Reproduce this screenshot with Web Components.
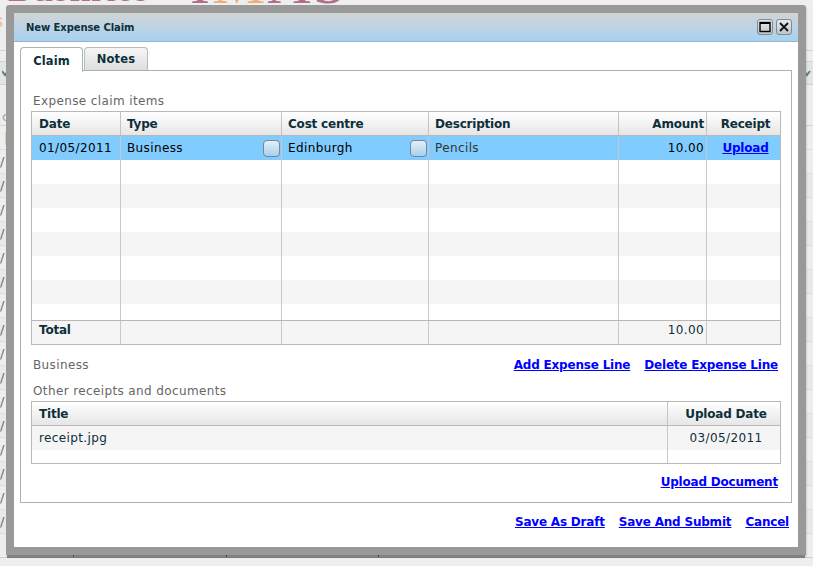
<!DOCTYPE html>
<html><head><meta charset="utf-8"><title>New Expense Claim</title>
<style>
html,body{margin:0;padding:0;width:813px;height:566px;overflow:hidden;background:#eee}
body{font:12px "DejaVu Sans",Verdana,sans-serif;position:relative}
</style></head><body>
<x-backdrop></x-backdrop>
<x-dialog heading="New Expense Claim">
  <x-tabs tabs="Claim|Notes">
    <x-caption>Expense claim items</x-caption>
    <x-grid id="g1" style="margin-top:2px"></x-grid>
    <x-linkbar style="margin-top:12px" pad="3">
      <x-caption slot="start">Business</x-caption>
      <x-link>Add Expense Line</x-link><x-link>Delete Expense Line</x-link>
    </x-linkbar>
    <x-caption style="margin-top:10px">Other receipts and documents</x-caption>
    <x-grid id="g2" style="margin-top:2px"></x-grid>
    <x-linkbar style="margin-top:10px" pad="3"><x-link>Upload Document</x-link></x-linkbar>
  </x-tabs>
  <x-linkbar slot="footer" pad="9"><x-link>Save As Draft</x-link><x-link>Save And Submit</x-link><x-link>Cancel</x-link></x-linkbar>
</x-dialog>
<script>
const GRIDS={
 g1:{cols:[{w:89},{w:161},{w:147},{w:190},{w:88,a:'right'},{w:73,a:'center'}],
  head:['Date','Type','Cost centre','Description','Amount','Receipt'],
  rows:[{c:'sel',h:24,v:['01/05/2011',{combo:'Business'},{combo:'Edinburgh'},{dim:'Pencils'},'10.00',{link:'Upload'}]},
   {h:24},{c:'alt',h:24},{h:24},{c:'alt',h:24},{h:24},{c:'alt',h:24},{h:16},
   {c:'tot',h:24,v:['Total','','','','10.00','']}]},
 g2:{cols:[{w:636},{w:112,a:'center'}],head:['Title','Upload Date'],
  rows:[{c:'alt',h:24,v:['receipt.jpg','03/05/2011']},{h:13}]}
};
const make=(name,css,html,init)=>customElements.define(name,class extends HTMLElement{
  constructor(){super();this.attachShadow({mode:'open'}).innerHTML='<style>'+css+'</style>'+html;}
  connectedCallback(){init&&init.call(this,this.shadowRoot);}
});
make('x-backdrop',`
:host{display:block;position:absolute;inset:0;overflow:hidden;background:#eee}
.logo{height:51px;display:flex;align-items:flex-start;overflow:hidden;border-bottom:1px solid #d4d4d4;box-sizing:border-box}
.biz{font:bold 36px/36px "Liberation Serif",serif;color:#b26f88;margin:-29px 0 0 8px;width:182px;letter-spacing:1.2px;flex:none}
.big{font:60px/60px "Liberation Serif",serif;color:#b0708a;margin:-47px 0 0 0;letter-spacing:2px;white-space:nowrap}
.big b{font-weight:400;color:#edb07c}
.s{position:absolute;left:-6px;top:12px;font:18px/18px "Liberation Sans",sans-serif;color:#efb98f}
.band{height:10px;border-bottom:1px solid #d4d4d4}
.head{height:22px;background:#e4e4e4;border-bottom:1px solid #d0d0d0;display:flex;justify-content:space-between;align-items:center;padding:0 2px 0 2px}
.tall{height:40px;border-bottom:1px solid #d4d4d4;box-sizing:content-box;font:13px/16px "DejaVu Sans",sans-serif;color:#9aa5a8;display:flex;align-items:flex-end;padding-left:2px}
.row{height:23px;border-bottom:1px solid #dedede;font:13px/23px "DejaVu Sans",sans-serif;color:#5a7078}
.row:nth-child(even){background:#e9e9e9}
.bar{padding-left:4px;color:#8a989c}
.last{background:linear-gradient(#666,#666) 73px 0/1px 100% no-repeat,linear-gradient(#666,#666) 226px 0/1px 100% no-repeat,linear-gradient(#666,#666) 378px 0/1px 100% no-repeat;border-bottom:1px solid #cfcfcf}
svg{display:block}
`,`<div class="logo"><div class="biz">Business</div><div class="big">I<b>M</b>AS</div></div>
<div class="s">s</div>
<div class="band"></div>
<div class="head"><svg width="6" height="7" viewBox="0 0 6 7"><path d="M0 1l3 4 3-4" fill="none" stroke="#5f7f8a" stroke-width="2"/></svg><svg width="8" height="7" viewBox="0 0 8 7"><path d="M1 1l3 4 3-4" fill="none" stroke="#5f7f8a" stroke-width="2"/></svg></div>
<div class="tall">c</div>
<div class="row bar">|</div>
<div id="rows"></div>`,function(r){
  const h=r.getElementById('rows');if(h.childElementCount)return;
  for(let i=0;i<16;i++){const d=document.createElement('div');d.className='row';d.textContent='/';h.appendChild(d);}
  const l=document.createElement('div');l.className='row last';h.appendChild(l);
});
make('x-dialog',`
:host{display:flex;flex-direction:column;position:absolute;left:6px;top:5px;width:800px;height:550px;box-sizing:border-box;border:8px solid #999;border-radius:3px 3px 0 0;background:#fff;box-shadow:0 4px 0 -1px rgba(60,60,60,.55),1px 2px 2px rgba(0,0,0,.12);color:#0e2f3a}
.bar{flex:none;height:29px;box-sizing:border-box;border-bottom:1px solid #8fb6d0;background:linear-gradient(#d0d4d6,#a9d2f0);display:flex;align-items:center;padding:0 6px 0 12px;gap:3px}
.t{flex:1;font:bold 10px/14px "DejaVu Sans",sans-serif;color:#0e2f3a;letter-spacing:-.08px;padding-top:2px}
.btn{width:16px;height:16px;box-sizing:border-box;border:1px solid #7f8a90;border-radius:3px;background:linear-gradient(#e8e8e8,#bcc6cc);display:flex;align-items:center;justify-content:center}
.body{flex:none;padding:5px 6px 0}
.foot{flex:none;padding-top:11px}
`,`<div class="bar"><div class="t"></div>
<div class="btn"><svg width="12" height="12" viewBox="0 0 12 12"><rect x="1" y="1.5" width="10" height="9" fill="none" stroke="#000" stroke-width="1.4"/><path d="M1 2h10" stroke="#000" stroke-width="2"/></svg></div>
<div class="btn"><svg width="10" height="10" viewBox="0 0 10 10"><path d="M1 1l8 8M9 1l-8 8" stroke="#111" stroke-width="1.8"/></svg></div></div>
<div class="body"><slot></slot></div><div class="foot"><slot name="footer"></slot></div>`,function(r){
  r.querySelector('.t').textContent=this.getAttribute('heading');
});
make('x-tabs',`
:host{display:block}
.tabs{display:flex;gap:1px;height:24px;position:relative;z-index:1;align-items:flex-start}
.tab{box-sizing:border-box;height:23px;border:1px solid #b4bcbc;border-bottom:0;border-radius:4px 4px 0 0;font:bold 11.5px/23px "DejaVu Sans",sans-serif;letter-spacing:.12px;color:#0e2f3a;text-align:center;background:linear-gradient(#f6f6f6,#dedede)}
.tab.on{height:25px;background:#fff;line-height:26px;width:63px;border-color:#a3b5b5}
.tab.off{width:64px}
.panel{box-sizing:border-box;height:433px;margin-top:-1px;border:1px solid #a3b5b5;padding:22px 10px 0;background:#fff}
`,`<div class="tabs"></div><div class="panel"><slot></slot></div>`,function(r){
  const t=r.querySelector('.tabs');if(t.childElementCount)return;
  this.getAttribute('tabs').split('|').forEach((n,i)=>{const d=document.createElement('div');d.className='tab '+(i?'off':'on');d.textContent=n;t.appendChild(d);});
});
make('x-caption',`:host{display:block;height:16px;font:12px/16px "DejaVu Sans",sans-serif;letter-spacing:.38px;color:#666;padding-left:2px}`,`<slot></slot>`);
make('x-link',`:host{display:inline-block;font:bold 12px/16px "DejaVu Sans",sans-serif;letter-spacing:-.2px;color:#00f;text-decoration:underline;white-space:nowrap;cursor:pointer}`,`<slot></slot>`);
make('x-linkbar',`
:host{display:flex;align-items:center;height:16px}
.s{flex:1}.e{display:flex;gap:14px}
`,`<div class="s"><slot name="start"></slot></div><div class="e"><slot></slot></div>`,function(){
  this.style.paddingRight=(this.getAttribute('pad')||0)+'px';
});
make('x-combo',`
:host{display:block;flex:none;width:17px;height:17px;box-sizing:border-box;border:1px solid #75889a;border-radius:4px;background:linear-gradient(#e6eff6,#a9cfee)}
`,``);
make('x-grid',`
:host{display:block;box-sizing:border-box;border:1px solid #b8b8b8;background:#fff;font:12px/16px "DejaVu Sans",sans-serif;letter-spacing:.38px;color:#0e2f3a}
.r{display:grid;box-sizing:border-box}
.c{box-sizing:border-box;border-right:1px solid #c8c8c8;padding:0 2px 0 6px;display:flex;align-items:center;justify-content:space-between;white-space:nowrap;min-width:0}
.c:last-child{border-right:0}
.c.right{justify-content:flex-end}.c.center{justify-content:center}
.c.first{padding-left:7px}
.h{height:24px;border-bottom:1px solid #b8b8b8;background:linear-gradient(#fff,#e6e6e6);font-weight:700;letter-spacing:-.2px}
.h .c{border-right-color:#c4c4c4}
.sel{background:#80ccff;color:#000}
.alt{background:#f5f5f5}
.tot{border-top:1px solid #b8b8b8;background:#f5f5f5}
.tot .c{align-items:flex-start;padding-top:1px}
.tot .c:first-child{font-weight:700;letter-spacing:-.2px}
.dim{color:#333}
.comb{padding-right:1px}
`,`<div id="o"></div>`,function(r){
  const cfg=GRIDS[this.id];if(!cfg)return;
  const o=r.getElementById('o');if(o.childElementCount)return;
  const cols=cfg.cols.map(c=>c.w+'px').join(' ');
  const row=(cls,h,cells)=>{const d=document.createElement('div');d.className='r '+cls;d.style.gridTemplateColumns=cols;if(h)d.style.height=h+'px';
    cfg.cols.forEach((c,i)=>{const e=document.createElement('div');const v=cells?cells[i]:'';e.className='c '+(c.a||'')+(i==0?' first':'');
      if(typeof v==='object'&&v.combo){e.classList.add('comb');const s=document.createElement('span');s.textContent=v.combo;e.append(s,document.createElement('x-combo'));}
      else if(typeof v==='object'&&v.link){const l=document.createElement('x-link');l.textContent=v.link;e.append(l);}
      else if(typeof v==='object'&&v.dim){const s=document.createElement('span');s.className='dim';s.textContent=v.dim;e.append(s);}
      else if(v){const s=document.createElement('span');s.textContent=v;e.append(s);}
      d.appendChild(e);});
    o.appendChild(d);};
  row('h',0,cfg.head);
  cfg.rows.forEach(x=>row(x.c||'',x.h,x.v));
});
</script>
</body></html>
